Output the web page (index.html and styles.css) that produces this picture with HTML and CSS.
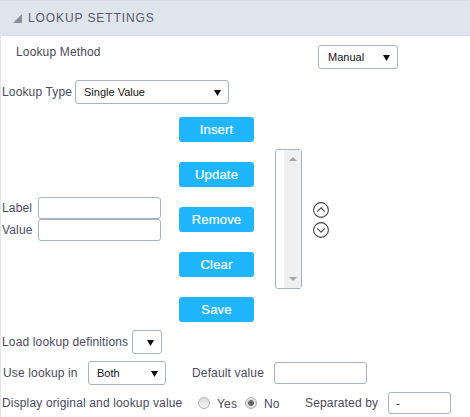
FILE: index.html
```html
<!DOCTYPE html>
<html lang="en">
<head>
    <meta charset="UTF-8">
    <title>Lookup Settings</title>
    <link rel="stylesheet" href="styles.css">
</head>
<body>
    <div class="panel">
        <div class="panel-title">
            <svg class="collapse-icon" width="9" height="9" viewBox="0 0 9 9"><polygon points="9,0 9,9 0,9"/></svg>
            <span>LOOKUP SETTINGS</span>
        </div>

        <div class="row row-method">
            <label class="method-label">Lookup Method</label>
            <select class="field method-select"><option>Manual</option></select>
        </div>

        <div class="row row-type">
            <label class="type-label">Lookup Type</label>
            <select class="field type-select"><option>Single Value</option></select>
        </div>

        <div class="editor">
            <div class="editor-fields">
                <div class="editor-field">
                    <label>Label</label>
                    <input type="text" class="field text-input">
                </div>
                <div class="editor-field">
                    <label>Value</label>
                    <input type="text" class="field text-input">
                </div>
            </div>
            <div class="editor-buttons">
                <button class="btn">Insert</button>
                <button class="btn">Update</button>
                <button class="btn">Remove</button>
                <button class="btn">Clear</button>
                <button class="btn">Save</button>
            </div>
            <div class="list-box">
                <div class="list-scroll">
                    <span class="arrow-up"></span>
                    <span class="arrow-down"></span>
                </div>
            </div>
            <div class="order-icons">
                <svg width="16" height="16" viewBox="0 0 16 16"><circle cx="8" cy="8" r="7.4"/><path d="M4.2 9.6 8 5.8l3.8 3.8"/></svg>
                <svg width="16" height="16" viewBox="0 0 16 16"><circle cx="8" cy="8" r="7.4"/><path d="M4.2 6.4 8 10.2l3.8-3.8"/></svg>
            </div>
        </div>

        <div class="row row-load">
            <label class="load-label">Load lookup definitions</label>
            <select class="field load-select"><option></option></select>
        </div>

        <div class="row row-use">
            <label class="use-label">Use lookup in</label>
            <select class="field use-select"><option>Both</option></select>
            <label class="default-label">Default value</label>
            <input type="text" class="field default-input">
        </div>

        <div class="row row-display">
            <label class="display-label">Display original and lookup value</label>
            <span class="radio yes-radio"></span>
            <label class="radio-label yes-label">Yes</label>
            <span class="radio radio-on no-radio"></span>
            <label class="radio-label no-label">No</label>
            <label class="separated-label">Separated by</label>
            <input type="text" class="field separated-input" value="-">
        </div>
    </div>
</body>
</html>
```

FILE: styles.css
```css
* {
    box-sizing: border-box;
}

body {
    margin: 0;
    background-color: #fff;
    font-family: "Liberation Sans", Arial, sans-serif;
    font-size: 12px;
    letter-spacing: 0.15px;
    color: #4a4a5c;
}

label {
    white-space: nowrap;
}

.panel {
    width: 470px;
    height: 417px;
    border-left: 1px solid #dfe5ec;
    overflow: hidden;
}

.panel-title {
    display: flex;
    align-items: center;
    gap: 6px;
    height: 36px;
    padding-left: 13px;
    margin-left: -1px;
    background-color: #dfe5ec;
    border-top: 1px solid #d3dde6;
    border-bottom: 1px solid #d3dde6;
    font-size: 12px;
    letter-spacing: 0.9px;
    color: #56596b;
}

.collapse-icon {
    fill: #8b8f98;
}

.row {
    display: flex;
    align-items: center;
}

.field {
    height: 24px;
    border: 1px solid #a9b2c0;
    border-radius: 3px;
    background-color: #fff;
    font-family: inherit;
    font-size: 11px;
    letter-spacing: 0;
    color: #111;
    outline: none;
}

select.field {
    appearance: none;
    padding-left: 8px;
    background-image: url("data:image/svg+xml,%3Csvg xmlns='http://www.w3.org/2000/svg' width='7' height='7'%3E%3Cpolygon points='0,1 7,1 3.5,7' fill='%23111'/%3E%3C/svg%3E");
    background-repeat: no-repeat;
    background-position: right 7px center;
}

.row-method {
    margin-top: 9px;
    height: 24px;
}

.method-label {
    width: 85px;
    margin-left: 15px;
    margin-top: -10px;
}

select.method-select {
    width: 80px;
    margin-left: 217px;
    padding-left: 9px;
}

.row-type {
    margin-top: 11px;
    padding-left: 1px;
}

.type-label {
    width: 73px;
}

.type-select {
    width: 154px;
}

.editor {
    display: flex;
    margin-top: 13px;
    height: 205px;
}

.editor-fields {
    width: 178px;
    padding: 80px 0 0 1px;
}

.editor-field {
    display: flex;
    align-items: center;
    justify-content: space-between;
    width: 159px;
    height: 22px;
}

.text-input {
    width: 123px;
    height: 22px;
}

.editor-buttons {
    display: flex;
    flex-direction: column;
    gap: 20px;
    width: 75px;
}

.btn {
    height: 25px;
    border: none;
    border-radius: 3px;
    background-color: #20b6ff;
    color: #fff;
    font-family: inherit;
    font-size: 13px;
    letter-spacing: 0.2px;
    -webkit-text-stroke: 0.2px #fff;
}

.list-box {
    display: flex;
    justify-content: flex-end;
    width: 27px;
    height: 140px;
    margin: 32px 0 0 21px;
    border: 1px solid #a9b2c0;
    border-radius: 3px;
}

.list-scroll {
    display: flex;
    flex-direction: column;
    justify-content: space-between;
    align-items: center;
    width: 17px;
    padding: 7px 0;
    background-color: #f0f0f0;
}

.arrow-up,
.arrow-down {
    border-left: 4px solid transparent;
    border-right: 4px solid transparent;
}

.arrow-up {
    border-bottom: 4px solid #a3a3a3;
}

.arrow-down {
    border-top: 4px solid #a3a3a3;
}

.order-icons {
    display: flex;
    flex-direction: column;
    gap: 4px;
    margin: 85px 0 0 11px;
}

.order-icons svg {
    fill: none;
    stroke: #444;
    stroke-width: 1.1;
}

.row-load {
    margin-top: 8px;
    padding-left: 1px;
}

.load-label {
    width: 130px;
}

.load-select {
    width: 30px;
}

.row-use {
    margin-top: 7px;
    padding-left: 2px;
}

.use-label {
    width: 73px;
}

.use-select {
    width: 78px;
    margin-left: 12px;
}

.default-label {
    width: 72px;
    margin-left: 26px;
}

.default-input {
    width: 93px;
    height: 22px;
    margin-left: 10px;
}

.row-display {
    margin-top: 7px;
    padding-left: 1px;
    height: 22px;
}

.display-label {
    width: 181px;
}

.radio {
    width: 12px;
    height: 12px;
    border: 1px solid #b0b0b0;
    border-radius: 50%;
    background: linear-gradient(#dcdcdc, #f4f4f4);
}

.radio-on {
    background: radial-gradient(circle, #666 0 2.5px, #e2e2e2 3.2px);
}

.yes-radio {
    margin-left: 15px;
}

.no-radio {
    margin-left: 7px;
}

.radio-label {
    margin: 2px 0 0 7px;
}

.yes-label {
    width: 21px;
}

.no-label {
    width: 17px;
}

.separated-label {
    width: 74px;
    margin-left: 24px;
}

.separated-input {
    width: 63px;
    height: 22px;
    margin-left: 9px;
    padding-left: 7px;
}
```
